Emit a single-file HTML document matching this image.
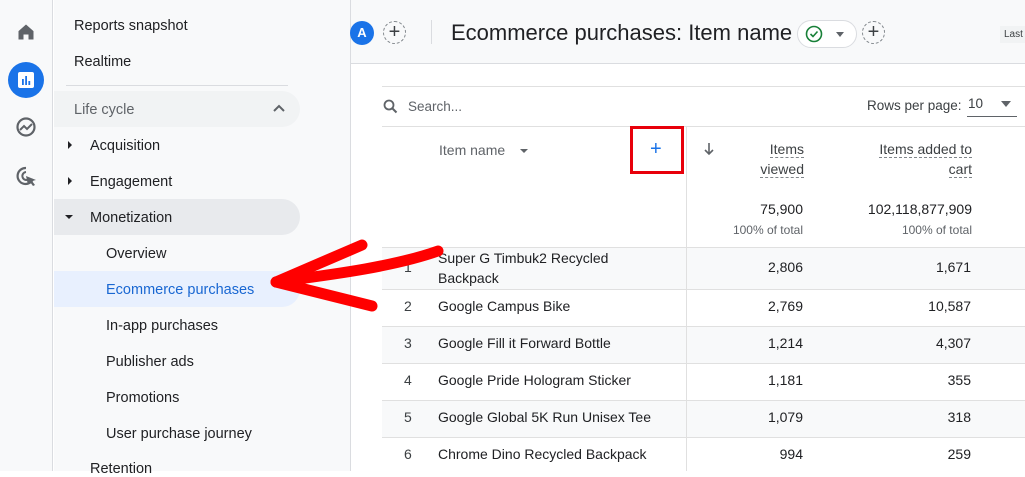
<!DOCTYPE html><html><head><meta charset="utf-8"><style>
*{margin:0;padding:0;box-sizing:border-box}
body{width:1025px;height:471px;overflow:hidden;position:relative;background:#fff;font-family:"Liberation Sans",Arial,sans-serif;color:#202124}
.a{position:absolute}
.nav{font-size:14.5px;color:#202124}
.row{position:absolute;left:382px;width:643px;border-top:1px solid #e0e0e0;font-size:14px}
.row.s{background:#f8f9fa}
.row span{position:absolute}
.n{left:22px;color:#3c4043}
.nm{left:56px;color:#202124}
.v1{right:222px}
.v2{right:54px}
</style></head><body>
<div class="a" style="left:0;top:0;width:53px;height:471px;background:#f8f9fa;border-right:1px solid #dadce0"></div>
<div class="a" style="left:54px;top:0;width:297px;height:471px;background:#f8f9fa;border-right:1px solid #dadce0"></div>
<div class="a" style="left:351px;top:0;width:674px;height:64px;background:#f8f9fa;border-bottom:1px solid #dadce0"></div>
<svg class="a" style="left:16px;top:22px" width="20" height="20" viewBox="0 0 24 24"><path d="M3 11L12 3l9 8v10h-6v-6h-6v6H3z" fill="#5f6368"/></svg>
<div class="a" style="left:8px;top:62px;width:36px;height:36px;border-radius:50%;background:#1a73e8"></div>
<svg class="a" style="left:17px;top:71px" width="18" height="18" viewBox="0 0 18 18"><rect x="1" y="1" width="16" height="16" rx="2" fill="#fff"/><rect x="5" y="8" width="1.8" height="6" fill="#1a73e8"/><rect x="8.2" y="5" width="1.8" height="9" fill="#1a73e8"/><rect x="11.4" y="10" width="1.8" height="4" fill="#1a73e8"/></svg>
<svg class="a" style="left:15px;top:116px" width="22" height="22" viewBox="0 0 22 22"><circle cx="11" cy="11" r="8.5" fill="none" stroke="#5f6368" stroke-width="2.2"/><path d="M5 14l4-4 3 3 5-5" fill="none" stroke="#5f6368" stroke-width="2"/></svg>
<svg class="a" style="left:15px;top:165px" width="24" height="24" viewBox="0 0 24 24"><path d="M11 3a8 8 0 1 0 7 11" fill="none" stroke="#5f6368" stroke-width="2.2"/><path d="M11 7a4 4 0 1 0 3 7" fill="none" stroke="#5f6368" stroke-width="2"/><path d="M11 11l10 4-4 1 3 4-2 1-3-4-2 3z" fill="#5f6368"/></svg>
<div class="a nav" style="left:74px;top:18px">Reports snapshot</div>
<div class="a nav" style="left:74px;top:54px">Realtime</div>
<div class="a" style="left:66px;top:85px;width:222px;height:1px;background:#dadce0"></div>
<div class="a" style="left:54px;top:91px;width:246px;height:36px;border-radius:0 18px 18px 0;background:#f1f3f4"></div>
<div class="a nav" style="left:74px;top:102px;color:#5f6368">Life cycle</div>
<svg class="a" style="left:273px;top:104px" width="12" height="8" viewBox="0 0 12 8"><path d="M1 7l5-5 5 5" fill="none" stroke="#5f6368" stroke-width="2"/></svg>
<div class="a" style="left:68px;top:141px;width:0;height:0;border-left:4px solid #202124;border-top:4px solid transparent;border-bottom:4px solid transparent"></div>
<div class="a nav" style="left:90px;top:138px">Acquisition</div>
<div class="a" style="left:68px;top:177px;width:0;height:0;border-left:4px solid #202124;border-top:4px solid transparent;border-bottom:4px solid transparent"></div>
<div class="a nav" style="left:90px;top:174px">Engagement</div>
<div class="a" style="left:54px;top:199px;width:246px;height:36px;border-radius:0 18px 18px 0;background:#e8eaed"></div>
<div class="a" style="left:65px;top:215px;width:0;height:0;border-top:4px solid #202124;border-left:4px solid transparent;border-right:4px solid transparent"></div>
<div class="a nav" style="left:90px;top:210px">Monetization</div>
<div class="a nav" style="left:106px;top:246px">Overview</div>
<div class="a" style="left:54px;top:271px;width:246px;height:36px;border-radius:0 18px 18px 0;background:#e8f0fe"></div>
<div class="a nav" style="left:106px;top:282px;color:#1967d2">Ecommerce purchases</div>
<div class="a nav" style="left:106px;top:318px">In-app purchases</div>
<div class="a nav" style="left:106px;top:354px">Publisher ads</div>
<div class="a nav" style="left:106px;top:390px">Promotions</div>
<div class="a nav" style="left:106px;top:426px">User purchase journey</div>
<div class="a nav" style="left:90px;top:461px">Retention</div>
<div class="a" style="left:350px;top:21px;width:24px;height:24px;border-radius:50%;background:#1a73e8;color:#fff;font-size:13px;font-weight:bold;text-align:center;line-height:24px">A</div>
<div class="a" style="left:383px;top:21px;width:23px;height:23px;border-radius:50%;border:1px dashed #80868b;color:#3c4043;font-size:20px;text-align:center;line-height:20px">+</div>
<div class="a" style="left:431px;top:20px;width:1px;height:24px;background:#dadce0"></div>
<div class="a" style="left:451px;top:20px;font-size:22px;color:#202124">Ecommerce purchases: Item name</div>
<div class="a" style="left:797px;top:20px;width:60px;height:28px;border-radius:14px;border:1px solid #dadce0;background:#fff"></div>
<svg class="a" style="left:805px;top:25px" width="18" height="18" viewBox="0 0 18 18"><circle cx="9" cy="9" r="7.5" fill="none" stroke="#188038" stroke-width="1.6"/><path d="M5.5 9l2.5 2.5 4.5-5" fill="none" stroke="#188038" stroke-width="1.6"/></svg>
<div class="a" style="left:836px;top:32px;border-top:5px solid #5f6368;border-left:4px solid transparent;border-right:4px solid transparent"></div>
<div class="a" style="left:862px;top:21px;width:23px;height:23px;border-radius:50%;border:1px dashed #80868b;color:#3c4043;font-size:20px;text-align:center;line-height:20px">+</div>
<div class="a" style="left:1000px;top:26px;width:25px;height:17px;background:#f1f3f4;font-size:10px;line-height:17px;padding-left:4px;color:#3c4043">Last</div>
<div class="a" style="left:382px;top:86px;width:643px;height:1px;background:#e0e0e0"></div>
<svg class="a" style="left:383px;top:99px" width="15" height="15" viewBox="0 0 15 15"><circle cx="6" cy="6" r="4.5" fill="none" stroke="#5f6368" stroke-width="1.8"/><path d="M9.5 9.5l4 4" stroke="#5f6368" stroke-width="2"/></svg>
<div class="a" style="left:408px;top:99px;font-size:13.5px;color:#5f6368">Search...</div>
<div class="a" style="left:867px;top:98px;font-size:13.5px;color:#3c4043">Rows per page:</div>
<div class="a" style="left:968px;top:96px;font-size:13.5px;color:#3c4043">10</div>
<div class="a" style="left:1001px;top:101px;border-top:6px solid #5f6368;border-left:5px solid transparent;border-right:5px solid transparent"></div>
<div class="a" style="left:967px;top:116px;width:50px;height:1px;background:#5f6368"></div>
<div class="a" style="left:382px;top:126px;width:643px;height:1px;background:#e0e0e0"></div>
<div class="a" style="left:686px;top:126px;width:1px;height:345px;background:#e0e0e0"></div>
<div class="a" style="left:439px;top:142px;font-size:14px;color:#5f6368">Item name</div>
<div class="a" style="left:520px;top:149px;border-top:4px solid #5f6368;border-left:4px solid transparent;border-right:4px solid transparent"></div>
<div class="a" style="left:630px;top:126px;width:54px;height:48px;border:3px solid #e8000b"></div>
<div class="a" style="left:650px;top:138px;font-size:20px;color:#1a73e8">+</div>
<svg class="a" style="left:703px;top:142px" width="12" height="14" viewBox="0 0 12 14"><path d="M6 1v11M2 8l4 4 4-4" fill="none" stroke="#5f6368" stroke-width="1.6"/></svg>
<div class="a" style="left:730px;top:139px;width:74px;text-align:right;font-size:14px;line-height:20px;color:#3c4043"><span style="border-bottom:1px dashed #80868b">Items</span><br><span style="border-bottom:1px dashed #80868b">viewed</span></div>
<div class="a" style="left:850px;top:139px;width:122px;text-align:right;font-size:14px;line-height:20px;color:#3c4043"><span style="border-bottom:1px dashed #80868b">Items added to</span><br><span style="border-bottom:1px dashed #80868b">cart</span></div>
<div class="a" style="left:700px;top:201px;width:103px;text-align:right;font-size:14px">75,900</div>
<div class="a" style="left:700px;top:223px;width:103px;text-align:right;font-size:12px;color:#5f6368">100% of total</div>
<div class="a" style="left:840px;top:201px;width:132px;text-align:right;font-size:14px">102,118,877,909</div>
<div class="a" style="left:840px;top:223px;width:132px;text-align:right;font-size:12px;color:#5f6368">100% of total</div>
<div class="row s" style="top:247px;height:42px"><span class="n" style="top:11px">1</span><span class="nm" style="top:0px;line-height:20px">Super G Timbuk2 Recycled<br>Backpack</span><span class="v1" style="top:11px">2,806</span><span class="v2" style="top:11px">1,671</span></div>
<div class="row" style="top:289px;height:37px"><span class="n" style="top:8px">2</span><span class="nm" style="top:8px">Google Campus Bike</span><span class="v1" style="top:8px">2,769</span><span class="v2" style="top:8px">10,587</span></div>
<div class="row s" style="top:326px;height:37px"><span class="n" style="top:8px">3</span><span class="nm" style="top:8px">Google Fill it Forward Bottle</span><span class="v1" style="top:8px">1,214</span><span class="v2" style="top:8px">4,307</span></div>
<div class="row" style="top:363px;height:37px"><span class="n" style="top:8px">4</span><span class="nm" style="top:8px">Google Pride Hologram Sticker</span><span class="v1" style="top:8px">1,181</span><span class="v2" style="top:8px">355</span></div>
<div class="row s" style="top:400px;height:37px"><span class="n" style="top:8px">5</span><span class="nm" style="top:8px">Google Global 5K Run Unisex Tee</span><span class="v1" style="top:8px">1,079</span><span class="v2" style="top:8px">318</span></div>
<div class="row" style="top:437px;height:37px"><span class="n" style="top:8px">6</span><span class="nm" style="top:8px">Chrome Dino Recycled Backpack</span><span class="v1" style="top:8px">994</span><span class="v2" style="top:8px">259</span></div>
<div class="a" style="left:686px;top:247px;width:1px;height:224px;background:#e0e0e0"></div>
<svg class="a" style="left:0;top:0" width="1025" height="471"><g fill="none" stroke="#f00" stroke-width="11" stroke-linecap="round" stroke-linejoin="round"><path d="M362 245L276 282L372 306"/><path d="M438 251C390 268 320 276 276 282"/></g></svg>
</body></html>
